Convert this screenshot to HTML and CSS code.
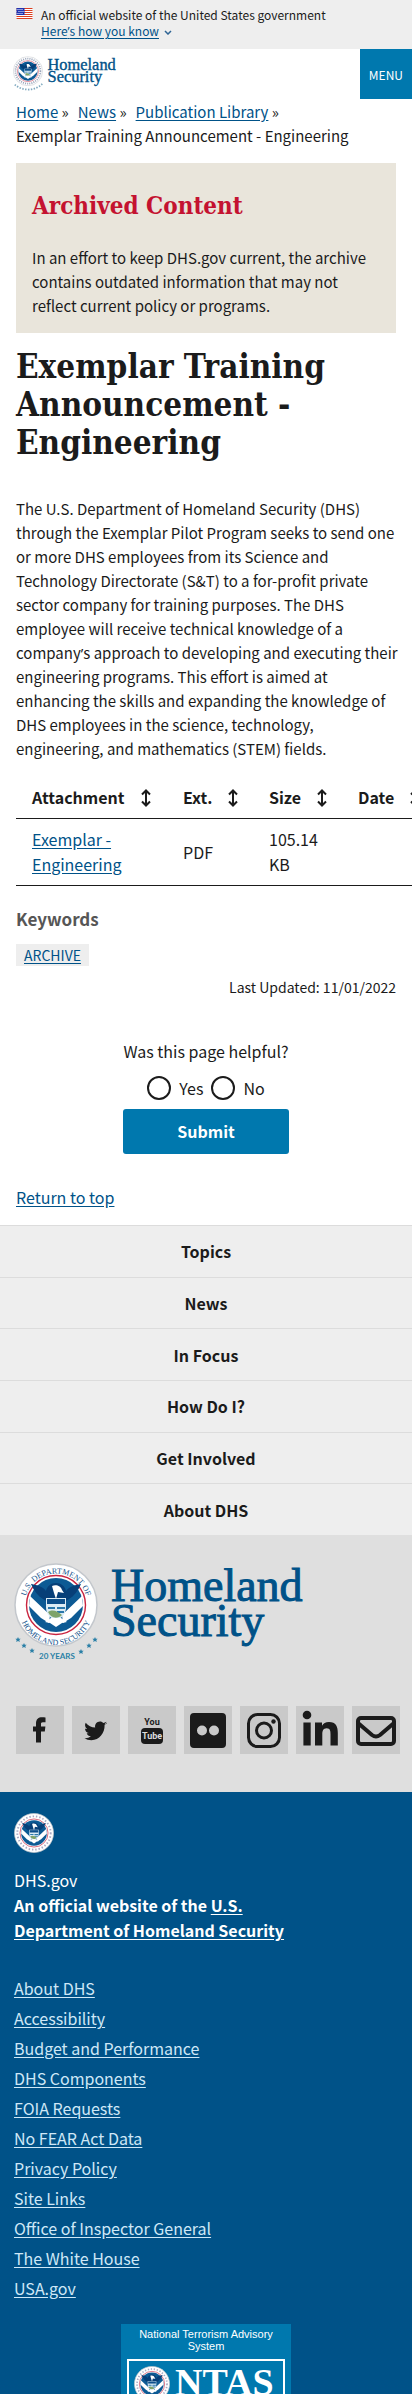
FILE: index.html
```html
<!DOCTYPE html>
<html lang="en">
<head>
<meta charset="utf-8">
<meta name="viewport" content="width=device-width, initial-scale=1">
<title>Exemplar Training Announcement - Engineering | Homeland Security</title>
<link rel="stylesheet" href="styles.css">
</head>
<body>
<svg class="defs" aria-hidden="true">
  <defs>
    <path id="arc-top" d="M10.500 42a31.500 31.500 0 0 1 63 0"/>
    <path id="arc-bottom" d="M5 45a37 37 0 0 0 74 0"/>
    <symbol id="eagle" viewBox="0 0 84 84">
      <circle cx="42" cy="42" r="41" fill="#fff" stroke="#c3c7cc" stroke-width="1.500"/>
      <circle cx="42" cy="42" r="29.500" fill="#fff" stroke="#c9243f" stroke-width="1.400"/>
      <circle cx="42" cy="42" r="27" fill="#0d5a94"/>
      <path d="M16 33 36 52 35 60 27 55 15 43zM68 33 48 52 49 60 57 55 69 43z" fill="#fff"/>
      <path d="M17 21c7 1 12 3 15 7 1-5 5-8 10-8s9 3 10 8c3-4 8-6 15-7-3 7-7 12-12 15l-5 3H34l-5-3c-5-3-9-8-12-15z" fill="#073f78"/>
      <path d="M38 23c4-2 9 0 10 4l2 3-6-1-2 7-2-6z" fill="#fff"/>
      <path d="M32 35h20v9c0 7-4 11-10 14-6-3-10-7-10-14z" fill="#dcecf5"/>
      <path d="M33 36h18v5H33z" fill="#0d4f8b"/>
      <path d="M34 44h7v2h-7zm9 0h8v2h-8zm0 4h7v2h-7z" fill="#2b78ab"/>
      <path d="M34 49c5-3 9-1 14 3-4 4-11 4-14-3z" fill="#7ea36a"/>
      <path d="M37 55h10l6 4-5 1-6 4-6-4-5-1z" fill="#fff"/>
    </symbol>
  </defs>
</svg>

<div class="banner">
  <svg class="flag" viewBox="0 0 16 11" aria-hidden="true">
    <path fill="#fff" d="M0 0h16v11H0z"/>
    <path fill="#db3e1f" d="M0 0h16v1H0zM0 2h16v1H0zM0 4h16v1H0zM0 6h16v1H0zM0 8h16v1H0zM0 10h16v1H0z"/>
    <path fill="#1e33b1" d="M0 0h8v7H0z"/>
    <path fill="#fff" d="M1 1h1v1H1zM3 1h1v1H3zM5 1h1v1H5zM2 3h1v1H2zM4 3h1v1H4zM6 3h1v1H6zM1 5h1v1H1zM3 5h1v1H3zM5 5h1v1H5z"/>
  </svg>
  <div>
    <p>An official website of the United States government</p>
    <button class="banner-toggle" type="button"><span>Here<span class="apos">’</span>s how you know</span>
      <svg viewBox="0 0 8 5" aria-hidden="true"><path d="m1 1 3 3 3-3" fill="none" stroke="#2e6494" stroke-width="1.500"/></svg>
    </button>
  </div>
</div>

<header class="header">
  <a class="brand" href="#" aria-label="Homeland Security home">
    <svg viewBox="0 0 292 100" aria-hidden="true">
      <use href="#eagle" width="84" height="84"/>
      <circle cx="42" cy="42" r="35" fill="none" stroke="#9aa5ba" stroke-width="5" stroke-dasharray="3 3"/>
      <path d="M5 80a58 58 0 0 0 78-3" fill="none" stroke="#7fa9bf" stroke-width="5" stroke-dasharray="4 4"/>
      <g class="wordmark"><text x="97" y="38">Homeland</text><text x="97" y="73">Security</text></g>
    </svg>
  </a>
  <button class="menu" type="button">MENU</button>
</header>

<main class="main">
  <nav class="crumbs" aria-label="Breadcrumb">
    <ol>
      <li><a href="#">Home</a> »</li>
      <li><a href="#">News</a> »</li>
      <li><a href="#">Publication Library</a> »</li>
      <li>Exemplar Training Announcement - Engineering</li>
    </ol>
  </nav>

  <section class="archived">
    <h2>Archived Content</h2>
    <p>In an effort to keep DHS.gov current, the archive contains outdated information that may not reflect current policy or programs.</p>
  </section>

  <h1>Exemplar Training Announcement - Engineering</h1>

  <p class="copy">The U.S. Department of Homeland Security (DHS) through the Exemplar Pilot Program seeks to send one or more DHS employees from its Science and Technology Directorate (S&amp;T) to a for-profit private sector company for training purposes. The DHS employee will receive technical knowledge of a company<span class="apos">’</span>s approach to developing and executing their engineering programs. This effort is aimed at enhancing the skills and expanding the knowledge of DHS employees in the science, technology, engineering, and mathematics (STEM) fields.</p>

  <div class="table-scroll">
    <table>
      <thead>
        <tr>
          <th class="c-name" scope="col"><div>Attachment <svg class="sort" viewBox="0 0 10 18"><path d="M5 2v14M1 5.500 5 1.500l4 4M1 12.500l4 4 4-4"/></svg></div></th>
          <th class="c-ext" scope="col"><div>Ext. <svg class="sort" viewBox="0 0 10 18"><path d="M5 2v14M1 5.500 5 1.500l4 4M1 12.500l4 4 4-4"/></svg></div></th>
          <th class="c-size" scope="col"><div>Size <svg class="sort" viewBox="0 0 10 18"><path d="M5 2v14M1 5.500 5 1.500l4 4M1 12.500l4 4 4-4"/></svg></div></th>
          <th class="c-date" scope="col"><div>Date <svg class="sort" viewBox="0 0 10 18"><path d="M5 2v14M1 5.500 5 1.500l4 4M1 12.500l4 4 4-4"/></svg></div></th>
        </tr>
      </thead>
      <tbody>
        <tr><td><a href="#">Exemplar - Engineering</a></td><td>PDF</td><td>105.14 KB</td><td></td></tr>
      </tbody>
    </table>
  </div>

  <h3>Keywords</h3>
  <a class="tag" href="#">ARCHIVE</a>
  <p class="updated">Last Updated: 11/01/2022</p>

  <form class="helpful">
    <fieldset>
      <legend>Was this page helpful?</legend>
      <div class="choices">
        <input type="radio" name="helpful" id="yes"><label for="yes">Yes</label>
        <input type="radio" name="helpful" id="no"><label for="no">No</label>
      </div>
    </fieldset>
    <button class="submit" type="button">Submit</button>
  </form>

  <p class="return"><a href="#">Return to top</a></p>
</main>

<footer>
  <nav class="footer-nav" aria-label="Footer">
    <a href="#">Topics</a>
    <a href="#">News</a>
    <a href="#">In Focus</a>
    <a href="#">How Do I?</a>
    <a href="#">Get Involved</a>
    <a href="#">About DHS</a>
  </nav>

  <div class="footer-brand">
    <svg class="footer-logo" viewBox="0 0 292 100" role="img" aria-label="Homeland Security">
      <use href="#eagle" width="84" height="84"/>
      <g class="seal-text">
        <text><textPath href="#arc-top" startOffset="50%">U.S. DEPARTMENT OF</textPath></text>
        <text><textPath href="#arc-bottom" startOffset="50%">HOMELAND SECURITY</textPath></text>
      </g>
      <g fill="#2a7fa6">
        <path id="star" d="m4 74 .8 1.700 1.900.1-1.400 1.300.5 1.900L4 78l-1.800 1 .5-1.900-1.400-1.300 1.900-.1z"/>
        <use href="#star" x="6" y="6"/><use href="#star" x="14" y="11"/><use href="#star" x="63" y="12"/><use href="#star" x="71" y="6"/><use href="#star" x="77"/>
      </g>
      <text class="years" x="43" y="96">20 YEARS</text>
      <g class="wordmark"><text x="97" y="38">Homeland</text><text x="97" y="73">Security</text></g>
    </svg>

    <div class="social">
      <a href="#" aria-label="Facebook"><svg viewBox="0 0 48 48"><path d="M29.500 11.600v4.600h-2.700c-1.500 0-1.800.7-1.800 1.900v2.300h4.400l-.6 5H25v11h-5v-11h-3v-5h3v-3c0-4.200 2.500-6.100 6-6.100 1.700 0 3 .1 3.500.3z"/></svg></a>
      <a href="#" aria-label="Twitter"><svg viewBox="0 0 48 48"><path d="M35 16.500c-.8 1.200-1.600 2-2.400 2.500.3 7.800-5.300 15.200-13.100 15.200-2.800 0-5.100-.8-7-2 2.500.2 4.700-.5 6.400-1.900-2.100-.1-3.600-1.400-4.200-3.100.7.100 1.400.1 2-.1-2.300-.6-3.700-2.500-3.700-4.700.7.400 1.400.6 2.100.6-2-1.500-2.700-4.200-1.400-6.300 2.500 3 5.700 4.700 9.500 4.900-.7-3.400 1.600-6.200 4.800-6.200 1.400 0 2.600.6 3.400 1.500 1-.2 2.100-.6 3-1.200-.4 1.100-1.100 2-2.100 2.500.9-.1 1.800-.3 2.700-.7z"/></svg></a>
      <a href="#" aria-label="YouTube"><svg viewBox="0 0 48 48"><rect x="13" y="22" width="22" height="16" rx="4"/><text class="yt" x="24" y="19">You</text><text class="yt yt-light" x="24" y="33">Tube</text></svg></a>
      <a href="#" aria-label="Flickr"><svg viewBox="0 0 48 48"><path fill-rule="evenodd" d="M10 7h28q4 0 4 4v27q0 4-4 4H10q-4 0-4-4V11q0-4 4-4zm8 12.500a5 5 0 1 0 0 10 5 5 0 0 0 0-10zm12 0a5 5 0 1 0 0 10 5 5 0 0 0 0-10z"/></svg></a>
      <a href="#" aria-label="Instagram"><svg viewBox="0 0 48 48"><g fill="none" stroke="#1b1b1b" stroke-width="3"><rect x="8.500" y="8.500" width="31" height="32" rx="9"/><circle cx="24" cy="24.500" r="7.500"/></g><circle cx="33.500" cy="15.500" r="2.200"/></svg></a>
      <a href="#" aria-label="LinkedIn"><svg viewBox="0 0 48 48"><circle cx="11" cy="9" r="4.300"/><path d="M7.400 16.500h7.300v23H7.400zM19 16.500h7v3.200c1.200-2.200 3.500-3.700 7-3.700 7 0 8.800 4.500 8.800 11v12.500h-7.300V28.300c0-3-.2-6-3.800-6s-4.400 2.800-4.400 5.800v11.400H19z"/></svg></a>
      <a href="#" aria-label="Email"><svg viewBox="0 0 48 48"><g fill="none" stroke="#1b1b1b" stroke-width="4" stroke-linejoin="round"><rect x="6" y="12" width="36" height="26" rx="3"/><path d="m6 17 14 12q4 3 8 0l14-12"/></g></svg></a>
    </div>
  </div>

  <div class="identifier">
    <svg class="small-seal" viewBox="0 0 84 84" aria-hidden="true"><use href="#eagle" width="84" height="84"/><circle cx="42" cy="42" r="35" fill="none" stroke="#a9a9c4" stroke-width="4" stroke-dasharray="3 4"/></svg>
    <p>DHS.gov</p>
    <p><strong>An official website of the <a href="#">U.S. Department of Homeland Security</a></strong></p>
    <ul>
      <li><a href="#">About DHS</a></li>
      <li><a href="#">Accessibility</a></li>
      <li><a href="#">Budget and Performance</a></li>
      <li><a href="#">DHS Components</a></li>
      <li><a href="#">FOIA Requests</a></li>
      <li><a href="#">No FEAR Act Data</a></li>
      <li><a href="#">Privacy Policy</a></li>
      <li><a href="#">Site Links</a></li>
      <li><a href="#">Office of Inspector General</a></li>
      <li><a href="#">The White House</a></li>
      <li><a href="#">USA.gov</a></li>
    </ul>
    <div class="ntas">
      <p>National Terrorism Advisory System</p>
      <svg viewBox="0 0 158 35" role="img" aria-label="NTAS">
        <path d="M1 35V1h156v34" fill="none" stroke="#fff" stroke-width="2"/>
        <svg x="7" y="7" width="36" height="36" viewBox="0 0 84 84"><use href="#eagle" width="84" height="84"/><circle cx="42" cy="42" r="35" fill="none" stroke="#a9a9c4" stroke-width="4" stroke-dasharray="3 4"/></svg>
        <text class="ntas-word" x="48" y="36">NTAS</text>
      </svg>
    </div>
  </div>
</footer>
</body>
</html>
```
FILE: styles.css
```css
* { box-sizing: border-box; }

body {
  margin: 0;
  background: #fff;
  color: #1b1b1b;
  font-family: "Noto Sans CJK SC", "Noto Sans", sans-serif;
  font-size: 15px;
  line-height: 24px;
}

h1, h2, h3, p, ul, ol { margin: 0; padding: 0; }
ul, ol { list-style: none; }
button { font-family: inherit; border: 0; cursor: pointer; }
a { color: #005288; text-underline-offset: 2px; }
svg { display: block; }

.defs { position: absolute; width: 0; height: 0; }
.apos { font-family: "Open Sans", sans-serif; line-height: 1; }

.banner {
  display: flex;
  gap: 8px;
  padding: 7px 16px 10px;
  background: #eee;
  font-size: 12px;
  line-height: 16px;
}
.flag { width: 17px; height: 11px; margin-top: 1px; }
.banner-toggle {
  display: flex;
  align-items: center;
  gap: 5px;
  padding: 0;
  background: none;
  color: #005288;
  font-size: 12px;
  line-height: 16px;
}
.banner-toggle > span { text-decoration: underline; text-underline-offset: 2px; }
.banner-toggle svg { width: 8px; height: 5px; margin-top: 2px; }

.header { display: flex; justify-content: space-between; align-items: center; }
.brand { padding-left: 13px; }
.brand svg { width: 104px; height: 36px; overflow: visible; }
.wordmark {
  font-family: "Liberation Serif", serif;
  font-size: 46px;
  fill: #005288;
  stroke: #005288;
  stroke-width: 1px;
}
.menu {
  height: 50px;
  padding: 0 9px;
  background: #0078ae;
  color: #fff;
  font-size: 12px;
}

.main { padding: 1px 16px 16px; }

.crumbs ol { display: flex; flex-wrap: wrap; column-gap: 9px; }

.archived {
  margin-top: 15px;
  padding: 27px 16px 15px;
  background: #e9e5db;
}
.archived h2 {
  margin-bottom: 24px;
  color: #c41230;
  font-family: "DejaVu Serif Condensed", "DejaVu Serif", serif;
  font-size: 24px;
  line-height: 32px;
}

h1 {
  margin: 15px 0 35px;
  font-family: "DejaVu Serif Condensed", "DejaVu Serif", serif;
  font-size: 33px;
  line-height: 38px;
}

.copy { margin-right: -8px; }

.table-scroll { margin: 16px -16px 0 0; overflow: auto; scrollbar-width: none; }
table { width: 412px; border-collapse: collapse; table-layout: fixed; font-size: 16px; line-height: 25px; }
th, td { padding: 8px 0 8px 16px; border-bottom: 1px solid #1b1b1b; text-align: left; }
th div { display: flex; align-items: center; gap: 16px; }
.c-name { width: 151px; }
.c-ext { width: 86px; }
.c-size { width: 89px; }
td { padding-right: 16px; }
.sort { width: 10px; height: 18px; fill: none; stroke: #1b1b1b; stroke-width: 2; }

h3 { margin: 21px 0 13px; color: #565656; font-size: 17px; line-height: 24px; }
.tag {
  display: block;
  width: fit-content;
  padding: 0 8px;
  background: #eee;
  font-size: 14px;
  line-height: 22px;
}
.updated { margin-top: 9px; font-size: 14px; text-align: right; }

.helpful { margin-top: 40px; display: flex; flex-direction: column; align-items: center; font-size: 16px; }
fieldset { margin: 0; padding: 0; border: 0; min-width: 0; }
legend { padding: 0; margin-bottom: 13px; }
.choices { display: flex; justify-content: center; gap: 8px; }
.choices input {
  appearance: none;
  width: 24px;
  height: 24px;
  margin: 0;
  border: 2px solid #1b1b1b;
  border-radius: 50%;
  background: #fff;
}
.submit {
  margin-top: 9px;
  padding: 0 54px;
  border-radius: 3px;
  background: #0078ae;
  color: #fff;
  font-size: 16px;
  font-weight: 700;
  line-height: 45px;
}
.return { margin-top: 31px; font-size: 16px; }

.footer-nav { display: grid; grid-auto-rows: 1fr; min-height: 310px; background: #eee; font-size: 16px; }
.footer-nav a {
  display: flex;
  align-items: center;
  justify-content: center;
  border-top: 1px solid #dcdcdc;
  color: #1b1b1b;
  font-weight: 700;
  text-decoration: none;
}

.footer-brand { padding: 28px 12px 38px 14px; background: #dfdfdf; }
.footer-logo { width: 292px; height: 100px; overflow: visible; }
.seal-text { font-family: "Liberation Serif", serif; font-size: 8px; fill: #0d4f8b; text-anchor: middle; }
.years { font-family: Lato, sans-serif; font-size: 8px; font-weight: 700; fill: #2a7fa6; text-anchor: middle; }
.social { display: flex; gap: 8px; margin: 43px 0 0 2px; }
.social a { width: 48px; height: 48px; background: #c9c9c9; }
.social svg { fill: #1b1b1b; }
.yt { font-family: Roboto, sans-serif; font-size: 9px; font-weight: 700; text-anchor: middle; }
.yt-light { fill: #dcdcdc; }

.identifier { padding: 21px 14px 0; background: #005288; color: #fff; font-size: 16px; line-height: 25px; }
.identifier a { color: #fff; }
.identifier li a { color: #cfe8f7; }
.small-seal { width: 40px; height: 40px; margin-bottom: 15px; }
.identifier strong { display: block; max-width: 300px; }
.identifier ul { margin-top: 30px; line-height: 30px; }
.ntas {
  width: 170px;
  margin: 21px auto 0;
  padding: 4px 6px 0;
  background: #0078ae;
  font-family: "Liberation Sans", sans-serif;
  font-size: 11px;
  line-height: 12px;
  text-align: center;
}
.ntas p { margin-bottom: 7px; }
.ntas-word { font-family: "Liberation Serif", serif; font-size: 38px; font-weight: 700; fill: #fff; }
```
